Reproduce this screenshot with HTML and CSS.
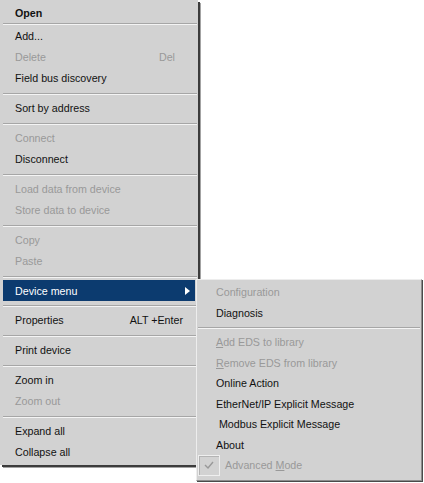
FILE: index.html
```html
<!DOCTYPE html>
<html>
<head>
<meta charset="utf-8">
<link rel="stylesheet" href="styles.css">
</head>
<body>
<div class="page">
  <div class="menu main">
    <div class="item bold first">Open</div>
    <div class="sep sep-first"></div>
    <div class="item">Add...</div>
    <div class="item disabled">Delete<span class="key key-del">Del</span></div>
    <div class="item">Field bus discovery</div>
    <div class="sep"></div>
    <div class="item">Sort by address</div>
    <div class="sep"></div>
    <div class="item disabled">Connect</div>
    <div class="item">Disconnect</div>
    <div class="sep"></div>
    <div class="item disabled">Load data from device</div>
    <div class="item disabled">Store data to device</div>
    <div class="sep"></div>
    <div class="item disabled">Copy</div>
    <div class="item disabled">Paste</div>
    <div class="sep"></div>
    <div class="item active">Device menu<span class="arrow"></span></div>
    <div class="sep sep-after-active"></div>
    <div class="item">Properties<span class="key key-alt">ALT +Enter</span></div>
    <div class="sep"></div>
    <div class="item">Print device</div>
    <div class="sep"></div>
    <div class="item">Zoom in</div>
    <div class="item disabled">Zoom out</div>
    <div class="sep"></div>
    <div class="item">Expand all</div>
    <div class="item">Collapse all</div>
  </div>

  <div class="menu sub">
    <div class="subitem disabled">Configuration</div>
    <div class="subitem">Diagnosis</div>
    <div class="subsep"></div>
    <div class="subitem disabled"><u>A</u>dd EDS to library</div>
    <div class="subitem disabled"><u>R</u>emove EDS from library</div>
    <div class="subitem">Online Action</div>
    <div class="subitem">EtherNet/IP Explicit Message</div>
    <div class="subitem">&nbsp;Modbus Explicit Message</div>
    <div class="subitem">About</div>
    <div class="subitem check disabled">
      <span class="checkbox">
        <svg width="10" height="8" viewBox="0 0 10 8"><polyline points="1,4 4,7 9,1" fill="none" stroke="#999999" stroke-width="1.4"/></svg>
      </span>
      <span>Advanced <u>M</u>ode</span>
    </div>
  </div>
</div>
</body>
</html>
```
FILE: styles.css
```css
html, body {
  margin: 0;
  padding: 0;
  background: #ffffff;
}

body {
  font-family: "Liberation Sans", Arial, sans-serif;
  font-size: 10.7px;
  color: #111111;
}

.page {
  position: relative;
  width: 424px;
  height: 483px;
  overflow: hidden;
}

.menu {
  background: #d2d2d2;
  box-sizing: border-box;
}

.main {
  width: 198px;
  padding-bottom: 3px;
  box-shadow: 2px 2px 0 #3c3c3c, 3px 3px 0 #a3a3a3;
}

.item {
  display: flex;
  align-items: center;
  height: 21px;
  margin: 0 1px 0 3px;
  padding-left: 12px;
  white-space: nowrap;
}

.item.first {
  height: 23px;
  padding-top: 2px;
  box-sizing: border-box;
}

.bold {
  font-weight: bold;
}

.disabled {
  color: #999999;
}

.key {
  margin-left: auto;
}

.key-del {
  padding-right: 22px;
}

.key-alt {
  padding-right: 14px;
}

.sep {
  height: 2px;
  box-sizing: border-box;
  margin: 5px 1px 2px 3px;
  border-top: 1px solid #a6a6a6;
  border-bottom: 1px solid #f4f4f4;
}

.sep.sep-first {
  margin-top: 0;
  margin-bottom: 0;
}

.item.active {
  margin-top: 1px;
  margin-right: 3px;
  background: #0c3b6f;
  color: #ffffff;
}

.sep.sep-after-active {
  margin-top: 4px;
}

.arrow {
  margin-left: auto;
  margin-right: 5px;
  width: 0;
  height: 0;
  border-left: 5px solid #ffffff;
  border-top: 4px solid transparent;
  border-bottom: 4px solid transparent;
}

.sub {
  position: absolute;
  left: 196px;
  top: 279px;
  width: 226px;
  height: 202px;
  padding-top: 2px;
  border-top: 1px solid #ededed;
  border-left: 1px solid #ededed;
  border-right: 1px solid #8c8c8c;
  border-bottom: 1px solid #8c8c8c;
  box-shadow: 1px 1px 0 #4a4a4a;
}

.subitem {
  display: flex;
  align-items: center;
  height: 20.5px;
  padding-left: 19px;
  white-space: nowrap;
}

.subsep {
  height: 2px;
  box-sizing: border-box;
  margin: 4px 1px 3px 1px;
  border-top: 1px solid #a6a6a6;
  border-bottom: 1px solid #f4f4f4;
}

.subitem.check {
  padding-left: 1px;
  gap: 5px;
}

.checkbox {
  display: flex;
  align-items: center;
  justify-content: center;
  width: 22px;
  height: 21px;
  box-sizing: border-box;
  border: 1px solid #efefef;
  box-shadow: inset 1px 1px 0 #b4b4b4;
}
```
